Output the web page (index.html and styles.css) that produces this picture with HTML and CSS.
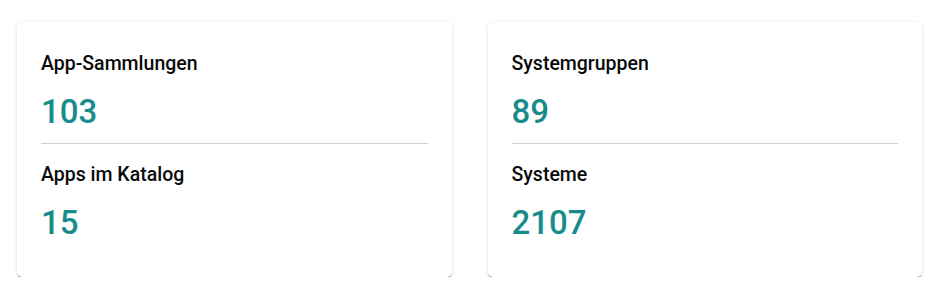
FILE: index.html
```html
<!DOCTYPE html>
<html lang="de">
<head>
<meta charset="utf-8">
<title>Dashboard</title>
<link rel="stylesheet" href="styles.css">
</head>
<body>
<main class="grid">
  <section class="card">
    <div class="stat">
      <div class="label">App-Sammlungen</div>
      <div class="value">103</div>
    </div>
    <hr class="divider">
    <div class="stat">
      <div class="label">Apps im Katalog</div>
      <div class="value">15</div>
    </div>
  </section>
  <section class="card">
    <div class="stat">
      <div class="label">Systemgruppen</div>
      <div class="value">89</div>
    </div>
    <hr class="divider">
    <div class="stat">
      <div class="label">Systeme</div>
      <div class="value">2107</div>
    </div>
  </section>
</main>
</body>
</html>
```
FILE: styles.css
```css
html, body {
  margin: 0;
  background: #ffffff;
  font-family: Roboto, "Noto Sans", sans-serif;
}

.grid {
  display: grid;
  grid-template-columns: 1fr 1fr;
  column-gap: 36px;
  padding: 22px 11px 0 17px;
}

.card {
  background: #fff;
  border-radius: 5px;
  padding: 24px 24px 23px;
  box-shadow: 0 2px 1px -1px rgba(0, 0, 0, 0.3),
              0 1px 1px 0 rgba(0, 0, 0, 0.14),
              0 1px 4px 0 rgba(0, 0, 0, 0.12);
}

.stat {
  padding: 19px 0 11px;
}

.stat:first-child {
  padding-top: 6px;
}

.label {
  font-size: 19.5px;
  line-height: 24px;
  font-weight: 500;
  color: #0a0a0a;
}

.value {
  margin-top: 16px;
  font-size: 33px;
  line-height: 40px;
  font-weight: 500;
  color: #178c8b;
}

.divider {
  margin: 0;
  border: 0;
  height: 1px;
  background: #cfcfcf;
}
```
